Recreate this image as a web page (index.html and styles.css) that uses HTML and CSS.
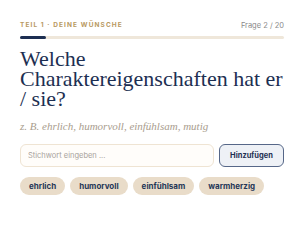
FILE: index.html
```html
<!DOCTYPE html>
<html lang="de">
<head>
  <meta charset="UTF-8" />
  <meta name="viewport" content="width=device-width, initial-scale=1.0"/>
  <title>Frage 2 - Deine Wünsche</title>
  <link rel="stylesheet" href="styles.css">
</head>
<body>

<main class="question">
  <div class="meta">
    <span class="part">Teil 1 · Deine Wünsche</span>
    <span class="count">Frage 2 / 20</span>
  </div>
  <div class="progress"><div class="progress-fill" style="width: 10%"></div></div>

  <h1>Welche Charaktereigenschaften hat er / sie?</h1>
  <p class="hint">z. B. ehrlich, humorvoll, einfühlsam, mutig</p>

  <form class="add-row" onsubmit="return false;">
    <input type="text" placeholder="Stichwort eingeben ..." />
    <button type="submit">Hinzufügen</button>
  </form>

  <div class="tags">
    <span class="tag">ehrlich</span>
    <span class="tag">humorvoll</span>
    <span class="tag">einfühlsam</span>
    <span class="tag">warmherzig</span>
  </div>
</main>

</body>
</html>
```

FILE: styles.css
```css
* { box-sizing: border-box; margin: 0; padding: 0; }
body {
  font-family: 'Inter', 'Noto Sans', sans-serif;
  background: #fff;
  color: #1d2f52;
}

.question {
  padding: 20px 20px;
}

.meta {
  display: flex;
  justify-content: space-between;
  align-items: center;
  height: 10px;
}

.part {
  font-size: 6.5px;
  font-weight: 700;
  letter-spacing: 1.1px;
  text-transform: uppercase;
  color: #b8995f;
}

.count {
  font-size: 7.5px;
  color: #8a8a8a;
}

.progress {
  margin-top: 6px;
  height: 3px;
  background: #efe7da;
  border-radius: 2px;
}

.progress-fill {
  height: 100%;
  background: #1d2f52;
  border-radius: 2px;
}

h1 {
  margin-top: 10px;
  font-family: 'Liberation Serif', serif;
  font-weight: 400;
  font-size: 22px;
  line-height: 20px;
  color: #1d2f52;
}

.hint {
  margin-top: 11px;
  font-family: 'Liberation Serif', serif;
  font-style: italic;
  font-size: 11px;
  color: #a99d8e;
}

.add-row {
  display: flex;
  gap: 5px;
  margin-top: 12px;
}

.add-row input {
  flex: 1;
  height: 23px;
  padding: 0 7px;
  border: 1px solid #efe4d3;
  border-radius: 6px;
  background: #fffdfa;
  font-family: inherit;
  font-size: 7.5px;
  color: #1d2f52;
}

.add-row input::placeholder {
  color: #a8a29a;
}

.add-row button {
  width: 65px;
  height: 23px;
  border: 1px solid #566788;
  border-radius: 6px;
  background: #eef1f6;
  font-family: inherit;
  font-size: 7.5px;
  font-weight: 700;
  color: #1d2f52;
}

.tags {
  display: flex;
  gap: 5px;
  margin-top: 10px;
}

.tag {
  display: inline-flex;
  align-items: center;
  height: 18px;
  padding: 0 9px;
  border-radius: 9px;
  background: #e9dcc9;
  font-size: 8px;
  font-weight: 700;
  color: #263757;
}
```
